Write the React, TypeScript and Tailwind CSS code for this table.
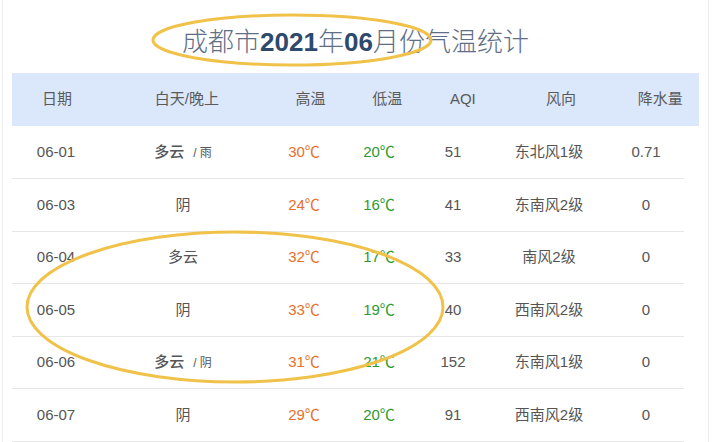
import React from "react";

type Row = {
  date: string;
  day: string;
  night?: string;
  high: string;
  low: string;
  aqi: string;
  wind: string;
  rain: string;
};

const rows: Row[] = [
  { date: "06-01", day: "多云", night: "雨", high: "30℃", low: "20℃", aqi: "51", wind: "东北风1级", rain: "0.71" },
  { date: "06-03", day: "阴", high: "24℃", low: "16℃", aqi: "41", wind: "东南风2级", rain: "0" },
  { date: "06-04", day: "多云", high: "32℃", low: "17℃", aqi: "33", wind: "南风2级", rain: "0" },
  { date: "06-05", day: "阴", high: "33℃", low: "19℃", aqi: "40", wind: "西南风2级", rain: "0" },
  { date: "06-06", day: "多云", night: "阴", high: "31℃", low: "21℃", aqi: "152", wind: "东南风1级", rain: "0" },
  { date: "06-07", day: "阴", high: "29℃", low: "20℃", aqi: "91", wind: "西南风2级", rain: "0" },
];

const cols = "grid grid-cols-[88fr_166fr_76fr_74fr_74fr_118fr_76fr] items-center text-center";

export default function App() {
  return (
    <div
      className="relative h-[442px] w-[720px] overflow-hidden bg-white"
      style={{ fontFamily: '"Liberation Sans", "Noto Sans CJK SC", sans-serif' }}
    >
      <div className="ml-[2px] flex h-full w-[707px] flex-col border-x border-[#ececec] px-[9px]">
        <h1 className="flex h-[73px] items-center justify-center pt-[13px] text-[26px] font-light text-[#5f6f86]">
          成都市<span className="font-bold text-[#2d4a6c]">2021</span>年<span className="font-bold text-[#2d4a6c]">06</span>月份气温统计
        </h1>

        <div className={`${cols} h-[54px] bg-[#dbe8fb] text-[15px] text-[#5a5a5a]`}>
          <div>日期</div>
          <div>白天/晚上</div>
          <div>高温</div>
          <div>低温</div>
          <div>AQI</div>
          <div>风向</div>
          <div>降水量</div>
        </div>

        <div className="w-[672px]">
          {rows.map((r) => (
            <div key={r.date} className={`${cols} h-[52.6px] border-b border-[#e6e6e6] text-[15px] text-[#555]`}>
              <div>{r.date}</div>
              <div>
                {r.night ? (
                  <span>
                    <span className="font-medium">{r.day}</span>
                    <span className="ml-[9px] text-[12px]">/ {r.night}</span>
                  </span>
                ) : (
                  r.day
                )}
              </div>
              <div className="text-[#e8702a]">{r.high}</div>
              <div className="text-[#2e9a2e]">{r.low}</div>
              <div>{r.aqi}</div>
              <div>{r.wind}</div>
              <div>{r.rain}</div>
            </div>
          ))}
        </div>
      </div>

      <svg className="pointer-events-none absolute left-0 top-0" width="720" height="442">
        <ellipse cx="292" cy="40" rx="139" ry="25" fill="none" stroke="#f0c24a" strokeWidth="3" />
        <ellipse cx="235" cy="307" rx="208" ry="75" fill="none" stroke="#f0c24a" strokeWidth="3" />
      </svg>
    </div>
  );
}
